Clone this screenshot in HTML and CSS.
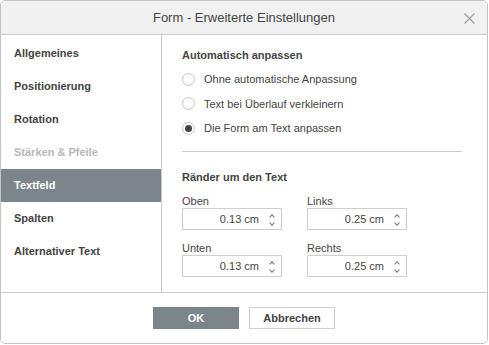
FILE: index.html
```html
<!DOCTYPE html>
<html lang="de">
<head>
    <meta charset="UTF-8">
    <meta name="viewport" content="width=device-width, initial-scale=1.0">
    <title>Form - Erweiterte Einstellungen</title>
    <link rel="stylesheet" href="styles.css">
</head>
<body>
    <div class="dialog">
        <div class="header">
            <div class="title">Form - Erweiterte Einstellungen</div>
            <div class="close">
                <svg width="11" height="11" viewBox="0 0 11 11">
                    <path d="M0.5 0.5 L10.5 10.5 M10.5 0.5 L0.5 10.5" stroke="#9b9b9b" stroke-width="1.1" fill="none"/>
                </svg>
            </div>
        </div>

        <div class="main">
            <div class="sidebar">
                <div class="nav-item">Allgemeines</div>
                <div class="nav-item">Positionierung</div>
                <div class="nav-item">Rotation</div>
                <div class="nav-item disabled">Stärken &amp; Pfeile</div>
                <div class="nav-item active">Textfeld</div>
                <div class="nav-item">Spalten</div>
                <div class="nav-item">Alternativer Text</div>
            </div>

            <div class="content">
                <div class="section-title">Automatisch anpassen</div>
                <div class="radio-list">
                    <div class="radio-row"><span class="radio"></span>Ohne automatische Anpassung</div>
                    <div class="radio-row"><span class="radio"></span>Text bei Überlauf verkleinern</div>
                    <div class="radio-row"><span class="radio checked"></span>Die Form am Text anpassen</div>
                </div>

                <div class="divider"></div>

                <div class="section-title margins-title">Ränder um den Text</div>
                <div class="margin-grid">
                    <div class="field">
                        <div class="field-label">Oben</div>
                        <div class="spin-input">
                            <span class="value">0.13 cm</span>
                            <span class="spinner"><i class="up"></i><i class="down"></i></span>
                        </div>
                    </div>
                    <div class="field">
                        <div class="field-label">Links</div>
                        <div class="spin-input">
                            <span class="value">0.25 cm</span>
                            <span class="spinner"><i class="up"></i><i class="down"></i></span>
                        </div>
                    </div>
                    <div class="field">
                        <div class="field-label">Unten</div>
                        <div class="spin-input">
                            <span class="value">0.13 cm</span>
                            <span class="spinner"><i class="up"></i><i class="down"></i></span>
                        </div>
                    </div>
                    <div class="field">
                        <div class="field-label">Rechts</div>
                        <div class="spin-input">
                            <span class="value">0.25 cm</span>
                            <span class="spinner"><i class="up"></i><i class="down"></i></span>
                        </div>
                    </div>
                </div>
            </div>
        </div>

        <div class="footer">
            <button class="btn primary">OK</button>
            <button class="btn">Abbrechen</button>
        </div>
    </div>
</body>
</html>
```

FILE: styles.css
```css
body {
    margin: 0;
    padding: 0;
    background-color: #fff;
    font-family: "Liberation Sans", Arial, sans-serif;
    font-size: 11px;
    color: #444;
}

.dialog {
    width: 486px;
    height: 342px;
    border: 1px solid #c4c4c4;
    border-radius: 5px;
    overflow: hidden;
    display: flex;
    flex-direction: column;
}

.header {
    height: 33px;
    background-color: #f1f1f1;
    border-bottom: 1px solid #cbcbcb;
    display: flex;
    align-items: center;
    justify-content: center;
    position: relative;
}

.header .title {
    font-size: 13px;
    color: #444;
}

.header .close {
    position: absolute;
    right: 12px;
    top: 12px;
    width: 11px;
    height: 11px;
}

.header .close svg {
    display: block;
}

.main {
    display: flex;
    height: 257px;
}

.sidebar {
    width: 160px;
    border-right: 1px solid #cbcbcb;
    padding-top: 2px;
}

.nav-item {
    height: 33px;
    line-height: 33px;
    padding-left: 13px;
    font-weight: bold;
    color: #444;
}

.nav-item.disabled {
    color: #b8b8b8;
}

.nav-item.active {
    background-color: #7d858c;
    color: #fff;
}

.content {
    flex: 1;
    padding: 13px 0 0 20px;
}

.section-title {
    font-weight: bold;
    line-height: 14px;
}

.radio-list {
    margin-top: 5px;
}

.radio-row {
    display: flex;
    align-items: center;
    height: 24.5px;
}

.radio {
    width: 13px;
    height: 13px;
    border: 1px solid #c6c6c6;
    border-radius: 50%;
    margin-right: 9px;
    box-sizing: border-box;
    display: flex;
    align-items: center;
    justify-content: center;
}

.radio.checked::after {
    content: "";
    width: 7px;
    height: 7px;
    border-radius: 50%;
    background-color: #444;
}

.divider {
    width: 280px;
    border-top: 1px solid #cbcbcb;
    margin-top: 10px;
}

.margins-title {
    margin-top: 18px;
}

.margin-grid {
    display: grid;
    grid-template-columns: 100px 100px;
    column-gap: 25px;
    row-gap: 11px;
    margin-top: 10px;
}

.field-label {
    line-height: 14px;
    margin-bottom: 0;
}

.spin-input {
    height: 20px;
    border: 1px solid #cfcfcf;
    display: flex;
    align-items: center;
    justify-content: flex-end;
}

.spin-input .value {
    margin-right: 7px;
}

.spinner {
    width: 13px;
    height: 20px;
    position: relative;
    margin-right: 2px;
}

.spinner i {
    position: absolute;
    left: 4px;
    width: 3px;
    height: 3px;
    border-left: 1px solid #777;
    border-top: 1px solid #777;
}

.spinner i.up {
    top: 6px;
    transform: rotate(45deg);
}

.spinner i.down {
    top: 12px;
    transform: rotate(225deg);
}

.footer {
    flex: 1;
    border-top: 1px solid #cbcbcb;
    display: flex;
    justify-content: center;
    align-items: flex-start;
    padding-top: 14px;
    gap: 10px;
}

.btn {
    width: 86px;
    height: 22px;
    border: 1px solid #cfcfcf;
    background-color: #fff;
    color: #444;
    font-family: "Liberation Sans", Arial, sans-serif;
    font-size: 11px;
    font-weight: bold;
    padding: 0;
    cursor: pointer;
}

.btn.primary {
    background-color: #7d858c;
    border-color: #7d858c;
    color: #fff;
}
```
